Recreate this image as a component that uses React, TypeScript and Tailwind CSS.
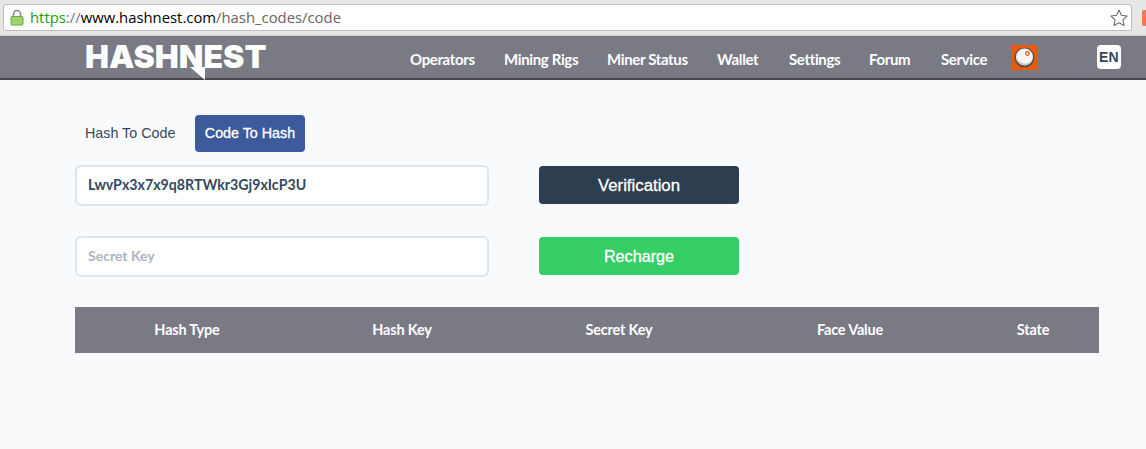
const lato = "font-['Lato',sans-serif]";
const arial = "font-['Liberation_Sans',sans-serif]";

const navItems = [
  { label: "Operators", w: "w-[65px]", mr: "mr-[29px]" },
  { label: "Mining Rigs", w: "w-[74px]", mr: "mr-[29px]" },
  { label: "Miner Status", w: "w-[81px]", mr: "mr-[29px]" },
  { label: "Wallet", w: "w-[43px]", mr: "mr-[29px]" },
  { label: "Settings", w: "w-[51px]", mr: "mr-[29px]" },
  { label: "Forum", w: "w-[43px]", mr: "mr-[29px]" },
  { label: "Service", w: "w-[47px]", mr: "mr-[24px]" },
];

const columns = [
  { label: "Hash Type", w: "w-[224px]" },
  { label: "Hash Key", w: "w-[206px]" },
  { label: "Secret Key", w: "w-[228px]" },
  { label: "Face Value", w: "w-[234px]" },
  { label: "State", w: "w-[132px]" },
];

function AddressBar() {
  return (
    <div className="h-[36px] bg-[#e6e6e6] pt-[4px] pl-[3px] pr-[14px] border-b border-[#d0d0d0] relative">
      <div className="h-[27px] bg-white border border-[#bdbdbd] rounded-[3px] flex items-center pl-[6px] pr-[2px]">
        <svg width="14" height="17" viewBox="0 0 14 17" className="mr-[6px] shrink-0">
          <path d="M3.5 8V5a3.5 3.5 0 0 1 7 0v3" fill="none" stroke="#8a8a8a" strokeWidth="1.6" />
          <rect x="1" y="7.5" width="12" height="8.5" rx="1" fill="#9bd46a" stroke="#6aa83f" />
        </svg>
        <span className="font-['Open_Sans',sans-serif] text-[14.85px] leading-none whitespace-nowrap">
          <span className="text-[#1c9a10]">https</span>
          <span className="text-[#777]">://</span>
          <span className="text-black">www.hashnest.com</span>
          <span className="text-[#666]">/hash_codes/code</span>
        </span>
        <svg width="20" height="20" viewBox="0 0 24 24" className="ml-auto" fill="#fff" stroke="#6f6f6f" strokeWidth="1.3" strokeLinejoin="round">
          <path d="M12 2.5l2.9 6.3 6.9.8-5.1 4.7 1.4 6.8-6.1-3.4-6.1 3.4 1.4-6.8-5.1-4.7 6.9-.8z" />
        </svg>
      </div>
      <div className="absolute right-0 top-[10px] w-[4px] h-[16px] bg-[#ee7a4d] rounded-l-[2px]" />
    </div>
  );
}

function Logo() {
  return (
    <div className="relative w-[181px] h-[24px] mt-[9px] ml-[85px] mr-[144px] shrink-0">
      <span className="font-['Inter',sans-serif] font-black text-white text-[32px] leading-[24px] whitespace-nowrap block">
        HASHNEST
      </span>
      <svg width="15" height="13" viewBox="0 0 15 13" className="absolute left-[105px] top-[22px]">
        <path d="M0 0h15v13z" fill="#fff" />
      </svg>
    </div>
  );
}

function NavBar() {
  return (
    <div className="h-[44px] bg-[#7a7a85] border-b-2 border-[#45454c] flex items-start">
      <Logo />
      <nav className={`flex items-center h-[42px] pt-[4px] ${lato}`}>
        {navItems.map((item) => (
          <a key={item.label} className={`${item.w} ${item.mr} text-white font-bold text-[15px] tracking-[-0.35px] whitespace-nowrap`}>
            {item.label}
          </a>
        ))}
      </nav>
      <div className="w-[25px] h-[25px] mt-[9px] bg-[#e8590c] flex items-center justify-center shrink-0">
        <svg width="21" height="21" viewBox="0 0 21 21">
          <circle cx="10.5" cy="10.5" r="10" fill="#55504c" />
          <circle cx="10.5" cy="10" r="8.5" fill="#f6f5f3" />
          <path d="M2.5 10a8 8 0 0 0 15 4 9 9 0 0 1-15-4z" fill="#c9c6c2" />
          <circle cx="13.5" cy="6.5" r="1.8" fill="none" stroke="#e8590c" strokeWidth="1.2" />
        </svg>
      </div>
      <div className="w-[24px] h-[24px] mt-[9px] ml-[60px] bg-white rounded-[4px] flex items-center justify-center shrink-0">
        <span className={`${arial} font-bold text-[14px] text-[#33475b] tracking-[0.4px]`}>EN</span>
      </div>
    </div>
  );
}

export default function App() {
  return (
    <div className="w-[1146px] h-[449px] bg-[#f9fafc] overflow-hidden">
      <AddressBar />
      <NavBar />
      <main className="pl-[75px] pt-[35px]">
        <div className={`flex items-center h-[37px] ${arial} text-[14.3px]`}>
          <span className="text-[#34495e] w-[120px] pl-[10px]">Hash To Code</span>
          <span className="h-[37px] w-[110px] bg-[#3c5a9c] text-white rounded-[4px] flex items-center justify-center [-webkit-text-stroke:0.3px_white]">
            Code To Hash
          </span>
        </div>

        <div className="flex mt-[13px]">
          <div className={`w-[414px] h-[41px] pb-[1px] bg-white border-2 border-[#dde5ef] rounded-[6px] flex items-center pl-[11px] ${lato} font-bold text-[14.2px] text-[#34495e]`}>
            LwvPx3x7x9q8RTWkr3Gj9xIcP3U
          </div>
          <button className={`w-[200px] h-[38px] pt-[1px] mt-[1px] ml-[50px] bg-[#2c3e50] rounded-[4px] text-white ${arial} text-[16.8px] [-webkit-text-stroke:0.3px_white]`}>
            Verification
          </button>
        </div>

        <div className="flex mt-[30px]">
          <div className={`w-[414px] h-[41px] pb-[2px] bg-white border-2 border-[#dde5ef] rounded-[6px] flex items-center pl-[11px] ${lato} font-bold text-[14px] text-[#aab4c2]`}>
            Secret Key
          </div>
          <button className={`w-[200px] h-[38px] mt-[1px] ml-[50px] bg-[#36ce66] rounded-[4px] text-white ${arial} text-[16.2px] [-webkit-text-stroke:0.3px_white]`}>
            Recharge
          </button>
        </div>

        <div className={`flex items-center w-[1024px] h-[46px] mt-[30px] bg-[#7a7a85] text-white font-bold text-[14.5px] tracking-[-0.2px] ${lato}`}>
          {columns.map((col) => (
            <div key={col.label} className={`${col.w} text-center whitespace-nowrap`}>
              {col.label}
            </div>
          ))}
        </div>
      </main>
    </div>
  );
}
